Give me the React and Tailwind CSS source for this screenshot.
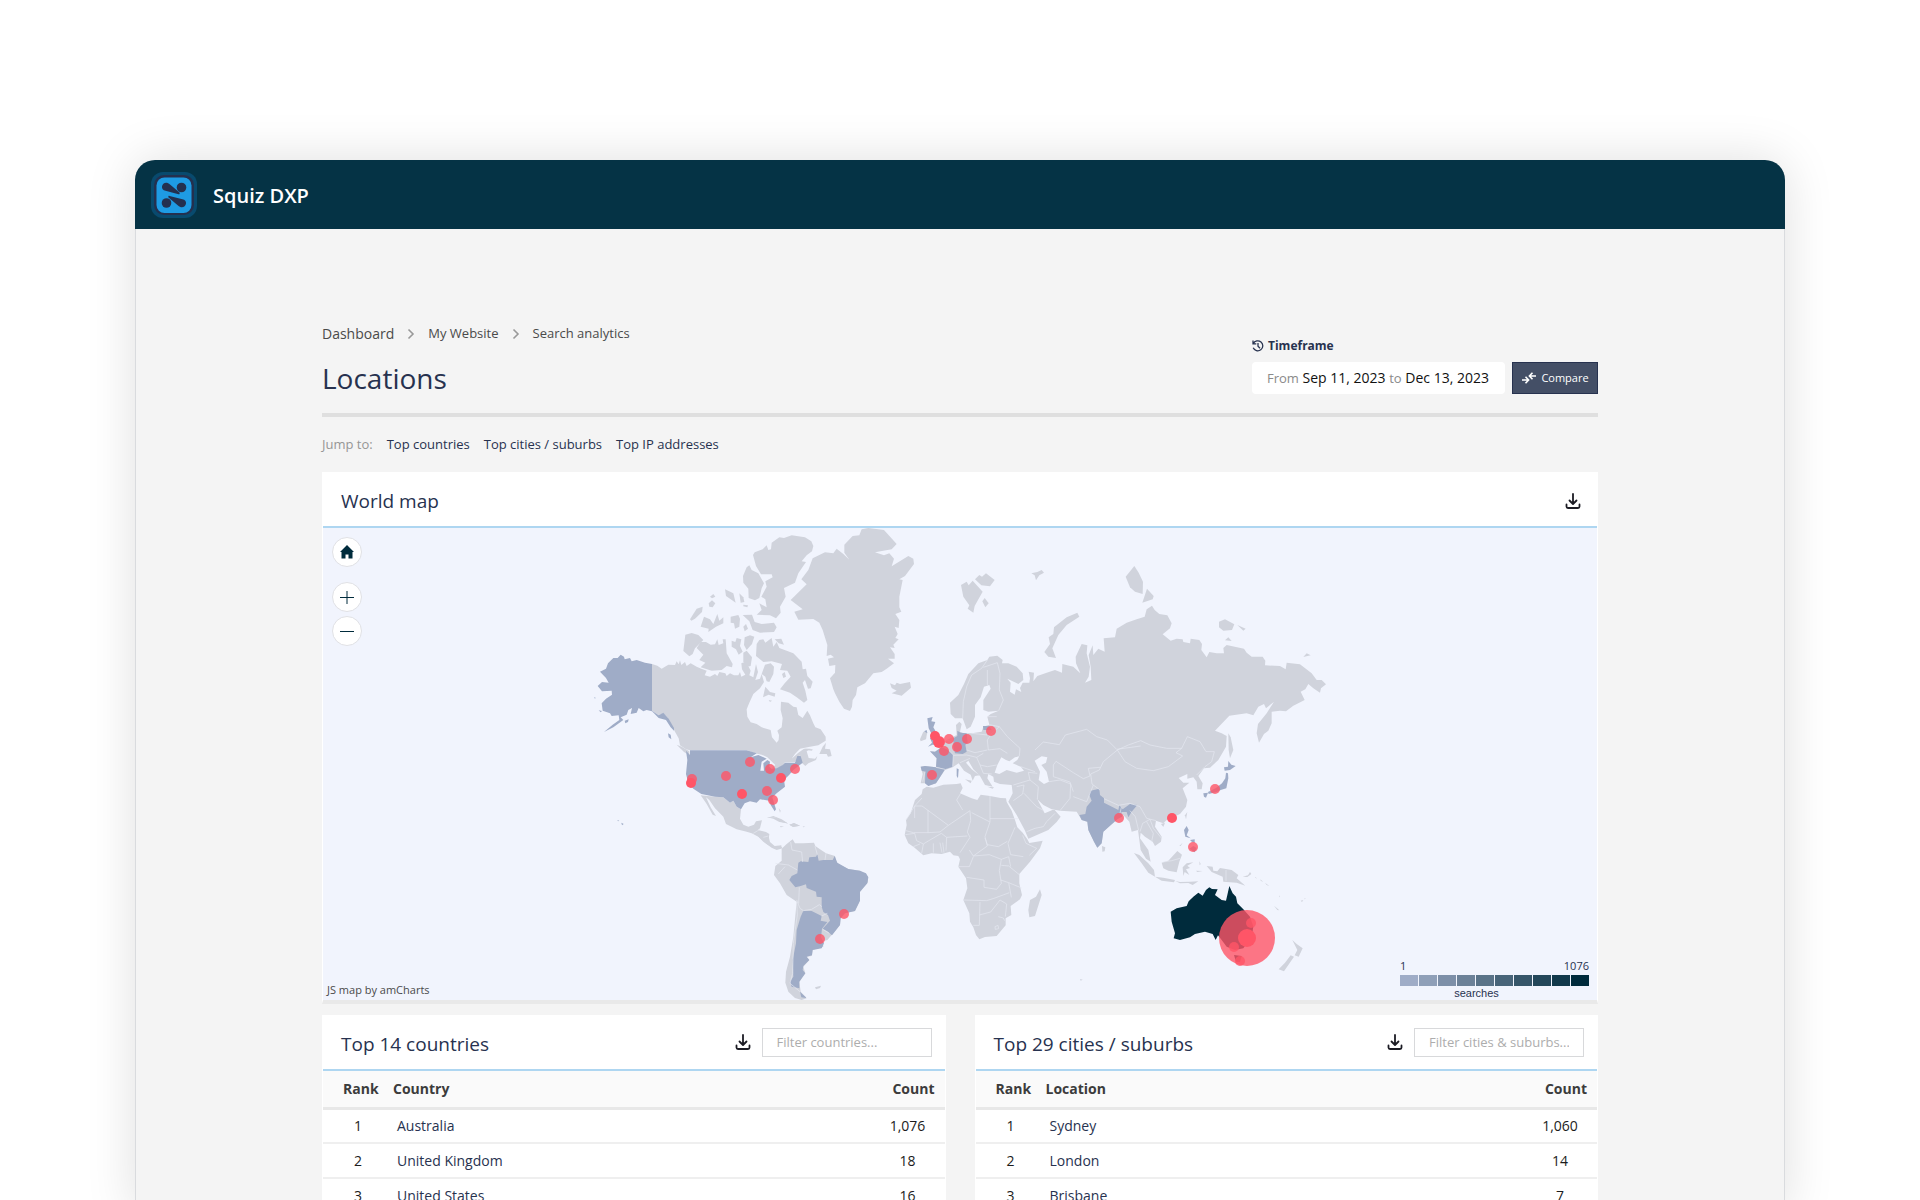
import { useState } from 'react'

const LAND = '#d0d3dc'
const ACTIVE = '#9facc7'
const MAX = '#002b3c'
const POINT = '#ff5567'

const countries = [
  { name: 'Australia', count: '1,076' },
  { name: 'United Kingdom', count: '18' },
  { name: 'United States', count: '16' },
]

const cities = [
  { name: 'Sydney', count: '1,060' },
  { name: 'London', count: '14' },
  { name: 'Brisbane', count: '7' },
]

const legend = ['#9facc7', '#8f9fb8', '#7d8fa8', '#6c8198', '#5a7388', '#486479', '#365569', '#24475a', '#12394b', '#002b3c']

// every region is drawn at 3x in its own coordinates, x / y is its origin on the map
const americas = {
  x: 580, y: 520,
  land: [
    // Canada
    'M216 432L232 437 245 446 265 434 285 435 290 424 296 433 300 421 304 435 315 426 320 438 332 430 350 440 364 446 380 452 374 466 390 470 405 462 412 468 418 456 436 460 440 468 450 460 462 466 475 466 480 456 484 470 496 464 486 448 484 430 494 426 506 440 512 452 508 466 520 472 528 432 534 456 526 480 540 476 545 462 552 486 540 505 520 522 508 548 500 568 502 590 512 607 530 612 545 622 572 630 576 652 590 668 596 660 597 645 592 632 605 622 608 595 602 570 603 545 625 548 640 560 650 562 655 585 668 594 682 572 690 586 700 610 706 622 722 628 737 650 737 662 715 676 690 680 660 686 645 702 635 716 655 698 672 686 692 686 680 694 686 714 705 716 712 708 708 720 685 730 676 738 665 728 660 706 645 726 615 727 606 738 586 748 575 745 586 735 562 712 545 704 525 700 500 690 330 691 318 688 300 676 296 655 282 630 262 592 250 580 236 586 216 572Z',
    'M718 702L728 680 738 668 735 686 750 688 755 708 744 710 740 702Z', 'M290 674L305 680 328 694 328 706 312 696Z', 'M675 686L698 688 696 692 680 690Z',
    // Arctic islands
    'M519 105L524 97 548 88 560 76 565 90 573 88 575 68 598 52 612 54 635 46 675 52 694 64 700 78 696 94 680 106 665 124 678 126 655 160 645 188 612 204 617 230 600 260 602 278 588 295 570 286 530 284 545 270 538 250 560 262 556 238 544 230 560 200 556 184 578 172 575 163 543 163 528 138Z',
    'M500 142L508 136 515 150 535 160 552 190 545 205 538 234 525 241 506 234 505 206 490 188 489 168Z',
    'M435 208L460 220 467 248 450 236 438 228Z', 'M478 220L490 232 493 246 482 248Z', 'M386 250L396 241 406 250 398 262 388 260Z', 'M390 230L400 222 406 230 396 235Z', 'M330 298L350 266 368 260 366 276 345 296 334 302Z',
    'M362 320L372 290 390 298 400 312 412 282 418 302 430 292 430 310 408 320 385 336 386 326Z', 'M452 290L475 285 480 296 478 320 465 326 462 310 452 308Z', 'M488 285L516 284 524 306 545 312 582 308 590 322 582 336 540 338 518 330 508 304Z', 'M490 320L498 312 504 326 494 334Z', 'M490 254L504 256 502 262 490 259Z',
    'M316 344L335 339 355 345 370 360 345 385 338 402 328 409 310 393Z',
    'M350 384L362 366 378 366 392 374 405 373 412 358 416 375 430 370 428 358 437 358 440 400 458 432 456 442 440 438 425 450 395 452 362 442 376 428 358 420 370 404Z',
    'M455 362L466 366 470 354 484 358 480 378 488 395 476 404 468 388 455 380Z', 'M494 352L510 346 523 350 516 372 500 390 492 375Z', 'M490 398L500 392 516 412 512 438 502 440 490 424Z',
    'M530 372L538 360 550 358 556 368 575 354 580 380 590 366 598 384 640 400 665 425 668 448 678 446 682 468 698 485 692 505 684 506 675 480 668 488 676 512 682 540 672 548 650 532 630 518 600 508 614 490 632 470 622 452 600 450 606 432 575 424 550 426 528 408Z',
    'M584 358L604 356 612 374 596 370Z', 'M555 434L572 430 582 440 580 462 568 486 560 484 556 470 545 462Z', 'M606 462L614 456 618 470 610 474Z', 'M549 532L556 500 570 516 586 520 584 530 566 524Z', 'M566 540L576 542 570 546Z',
    // Greenland
    'M632 240L680 193 664 178 685 150 698 115 735 97 760 100 770 86 790 102 808 119 793 98 793 74 818 48 838 46 845 28 865 24 912 30 950 72 935 88 885 97 912 106 928 100 942 116 935 139 985 108 1000 116 1002 132 975 168 958 178 968 180 958 230 958 262 964 275 946 282 958 300 956 324 944 320 953 342 946 354 956 358 940 374 944 384 930 382 944 402 944 416 924 416 942 430 920 446 905 456 880 460 855 490 832 502 828 525 818 540 816 560 810 573 792 566 778 545 765 520 760 508 750 475 765 458 766 435 748 438 744 416 762 412 752 404 740 408 742 375 728 330 718 308 700 297 655 299 643 275 668 268Z',
    'M930 490L945 496 950 488 960 492 990 486 993 503 965 527 935 520 950 512 935 504Z',
    // Mexico and Central America
    'M362 826L405 830 430 832 450 848 460 842 470 860 483 868 480 896 490 914 505 920 522 914 528 904 546 901 540 925 534 930 558 936 568 942 565 966 580 980 602 978 608 985 590 990 575 983 550 965 535 950 515 940 500 935 470 928 438 912 430 890 405 865 388 840 378 832 392 862 408 888 398 884 380 852Z',
    'M560 894L580 888 605 898 625 911 604 906 585 892Z', 'M628 914L642 909 660 917 640 921Z', 'M600 918L612 920 602 922Z', 'M668 919L676 920 670 922Z', 'M596 864L602 872 600 878Z',
  ],
  active: [
    'M53 498L66 486 86 488 78 474 60 455 78 446 84 430 100 414 113 414 122 404 132 410 134 418 150 414 155 424 170 420 195 428 216 432 216 572 236 586 250 578 266 596 282 624 282 632 272 622 258 600 236 594 216 574 200 570 190 574 176 564 170 578 152 582 156 564 145 570 140 584 122 592 130 600 100 622 72 636 98 614 118 600 116 586 95 588 90 580 68 572 65 550 78 536 96 524 95 512 66 514Z',
    'M134 602L146 598 144 606 136 610Z', 'M264 640L272 644 274 658 266 652Z', 'M56 571L66 573 62 577Z', 'M42 532L47 533 45 536Z', 'M124 908L131 912 126 916Z', 'M112 900L118 902 114 904Z',
    'M318 692L330 705 330 691 500 691 530 700 512 712 535 705 560 716 545 725 541 752 552 752 550 730 562 720 570 725 568 740 575 746 590 745 608 735 615 728 645 728 652 708 662 708 668 728 640 750 628 764 612 780 615 800 590 820 577 832 588 868 584 874 572 855 568 842 540 838 530 848 510 844 494 850 483 868 470 860 460 842 450 848 430 832 405 830 364 822 340 806 325 790 318 762 322 720Z',
  ],
  lines: [],
}

const southAmericaAfrica = {
  x: 740, y: 800,
  land: [
    'M125 146L140 132 158 118 165 130 190 130 222 128 226 138 240 148 258 160 285 168 290 190 325 207 360 212 384 230 384 246 360 276 358 305 345 333 315 340 302 355 300 375 275 405 262 420 248 424 250 440 218 450 215 468 200 470 208 480 190 500 196 520 178 545 182 575 200 595 185 600 165 594 145 575 136 548 138 515 150 470 160 410 170 305 140 285 120 250 102 225 106 198 125 182Z',
    'M40 96L62 98 85 106 90 126 104 138 124 136 124 144 104 146 80 132Z', 'M225 562L243 557 240 564 228 568Z', 'M82 52L105 52 125 60 143 70 118 66 100 56Z', 'M148 74L162 70 180 77 158 80Z',
    'M560 -40L580 -37 610 -46 650 -48 662 -50 668 -36 660 -20 695 -5 712 0 722 -16 750 -12 782 -6 798 -5 800 6 815 32 825 60 832 82 848 98 862 118 868 129 908 122 900 145 870 185 838 222 838 250 846 285 840 298 812 318 814 345 797 355 797 376 770 408 735 411 718 418 708 405 700 382 690 365 688 340 670 300 682 265 678 235 655 200 660 178 655 168 640 166 630 155 605 162 575 160 550 166 522 142 505 130 494 105 500 75 498 60 512 40 525 0 545 -18 548 -32Z',
    'M900 268L905 285 885 348 868 352 865 330 870 300 888 290Z',
  ],
  active: [
    'M175 188L182 184 205 186 208 172 228 170 232 163 236 182 250 180 278 180 284 168 292 188 325 207 360 212 378 220 385 232 382 250 360 275 360 302 345 333 315 340 302 355 300 375 276 406 262 394 248 386 270 362 264 345 250 336 245 320 245 292 230 290 228 275 200 264 198 253 182 258 166 262 148 240 155 228 172 220Z',
    'M190 332L215 333 245 348 242 362 262 366 246 386 243 412 252 430 245 445 218 450 216 466 200 470 208 480 190 498 188 510 196 520 178 545 178 565 155 560 150 545 160 530 158 480 168 430 170 390 182 350Z', 'M180 575L200 594 184 592Z',
  ],
  lines: [
    'M152 126L156 150 185 156 188 186M225 138L232 164M258 160L255 180M106 190L145 195 172 210M115 222L135 200M170 300L180 325 190 332M178 262L176 310M190 332L215 328 238 314 246 320M245 348L262 340M170 305L172 345 160 430 158 520 150 550 180 575M248 388L268 400M40 100L60 88M70 112L85 108',
    'M546 -6L524 18 498 60M546 18H524V54M546 18L625 76 690 32M564 30V98H520L498 92M564 98L600 96 625 76M662 -20L650 0 668 30M750 -12V66L695 38M750 56H834M750 66L735 110 742 138 700 168 688 150M690 32L692 62 682 96 690 112 660 158M682 108L620 112 618 152M735 114L742 134 775 140 802 124M825 82L812 112 804 130 812 164 850 170M848 106L858 130 890 145 868 166M700 168L748 164 784 178 778 212 784 250 770 268 732 262V240L680 232M670 300L740 302 765 294 808 278M784 196L806 198 838 224M782 240L806 248 845 264M806 248L814 292M720 306L718 376 700 376M718 345L752 336 780 300 800 312 796 350M765 380L774 376 776 386 766 388ZM620 112L604 100 570 120M580 130V158M600 128L606 158M608 128L612 158M545 160L550 132 570 120M520 140L540 132M496 104L524 100 530 122 550 132M784 178L806 170 812 200M655 200H688L700 170M775 350L790 354 794 362',
  ],
}

const eurasia = {
  x: 900, y: 520,
  land: [
    'M150 548L175 525 192 492 205 462 235 430 262 420 268 410 292 407 308 420 306 430 325 430 350 440 368 460 370 480 355 492 322 476 332 488 330 515 344 524 348 508 364 516 360 504 368 488 388 488 390 475 386 455 402 458 400 484 412 468 440 458 465 450 486 458 487 432 520 440 541 460 528 430 527 410 545 372 562 376 560 400 570 440 566 470 555 488 574 480 572 440 566 405 578 376 580 405 595 386 614 395 611 355 645 352 650 326 680 308 710 298 734 290 740 268 756 257 764 270 778 282 802 286 815 310 810 325 788 343 812 362 830 356 848 358 850 366 870 370 872 356 898 360 906 372 904 390 920 412 928 396 950 400 972 400 970 384 980 375 1032 386 1040 398 1055 410 1088 410 1096 422 1095 436 1140 438 1157 448 1160 428 1200 433 1235 460 1250 480 1265 480 1278 493 1263 505 1260 518 1240 505 1225 492 1216 508 1202 515 1214 540 1180 557 1158 574 1140 572 1115 575 1115 610 1105 632 1092 642 1077 668 1070 640 1074 612 1100 580 1122 545 1110 555 1098 565 1092 552 1075 560 1060 586 1040 580 988 587 945 632 965 640 980 648 978 680 955 720 930 743 912 745 895 768 908 790 905 808 892 808 890 785 880 772 862 776 862 762 836 774 850 788 868 788 848 805 862 840 858 860 840 882 800 900 790 910 768 902 765 920 785 950 783 965 765 978 758 965 735 950 722 938 720 955 745 990 752 1025 738 1016 722 990 714 930 695 935 688 905 670 885 658 892 610 935 605 970 592 983 582 965 565 930 562 905 545 900 530 875 480 872 455 868 430 855 412 838 434 880 452 872 462 868 482 890 470 906 445 930 385 956 374 930 350 885 325 845 338 820 335 795 300 792 282 785 280 770 265 762 262 775 278 800 255 795 240 768 220 748 205 722 198 728 215 748 238 766 225 768 218 782 212 764 192 752 176 730 158 742 135 750 118 775 108 790 85 797 75 790 62 790 68 762 62 740 75 738 108 742 110 715 90 694 105 695 125 680 140 660 160 650 170 645 168 615 178 605 185 612 180 635 190 640 215 640 245 635 250 620 268 614 262 590 272 582 296 572 265 575 250 570 250 540 272 506 268 495 252 500 242 532 225 555 225 590 212 620 200 628 188 595 165 595 152 582Z',
    'M60 658L70 635 82 636 78 658 62 664Z', 'M195 778L215 782 212 790Z', 'M262 800L282 802 278 806Z',
    // Arctic
    'M183 195L200 185 206 196 218 182 248 215 234 240 224 258 220 278 203 266 208 256 190 230Z', 'M225 178L238 165 246 170 258 160 284 180 270 199 244 196Z', 'M247 244L254 234 266 250 256 262Z', 'M394 160L412 156 425 150 432 158 418 166 408 181 404 166Z',
    'M433 396L450 372 446 352 460 342 462 322 500 292 532 278 538 290 500 315 475 345 457 385 468 414 445 410Z',
    'M677 170L703 138 716 158 729 185 728 222 705 215 690 202Z', 'M741 206L761 228 758 238 727 248Z', 'M957 305L975 298 1003 313 996 330 970 332 957 322Z', 'M1012 315L1037 326 1030 332Z', 'M975 361L985 352 995 363Z', 'M1210 411L1220 400 1232 406Z',
    'M985 640L992 652 1000 690 990 715 986 690Z', 'M606 978L616 982 614 994 607 995Z',
  ],
  active: [
    'M82 595L98 591 94 604 106 606 100 622 115 648 130 660 122 675 98 674 84 680 96 668 90 655 98 648 86 625Z', 'M72 634L80 630 82 640Z',
    'M90 694L105 695 125 682 145 690 160 705 158 740 135 748 108 740 110 715Z',
    'M62 740L75 738 108 742 135 748 118 775 108 790 85 798 75 790 76 755 65 752Z',
    'M160 655L172 648 172 632 182 638 200 640 203 668 196 674 200 695 188 702 165 700 160 680Z',
    'M249 618L268 618 275 630 250 630Z', 'M170 745L176 748 174 775 170 768Z',
    'M572 812L598 806 600 825 612 835 612 848 655 870 658 856 668 868 690 852 712 855 695 875 685 892 680 876 664 876 666 890 652 898 610 935 605 970 592 983 582 965 565 930 562 905 545 900 538 885 556 882 560 860 575 842 568 825Z',
    'M985 723L994 734 1007 738 990 750 974 752 972 742 984 740Z', 'M978 758L984 760 985 775 979 805 962 810 950 816 926 822 924 816 948 804 966 790 976 775Z', 'M910 820L924 818 918 833 912 830Z',
  ],
  lines: [
    'M652 690L685 675 722 662 750 675 800 685 845 685 862 650 900 665 918 695 943 695 935 725 915 740 890 765M652 690L675 725 710 745 760 752 805 740 848 708 828 698 845 685M652 690L610 725 598 750 572 762 576 792 600 810',
    'M405 690L430 666 478 674 496 645 560 628 590 650 622 660 650 688 722 678M460 735L468 724 520 758 550 776 570 768 565 745 600 742M460 735V770L510 786 520 815M447 785L480 780 512 792 510 835 480 872M520 830L560 845 580 795M612 836L655 856 690 850 720 860 740 895 768 902M720 935L728 910 750 898 760 925 785 955M740 905L760 940 755 965M690 872L706 890 716 932M664 862L660 880',
    'M262 420L245 445 215 465 200 500 190 545 188 595M262 450L262 495M250 442L292 428 300 460 298 510 310 540 296 572M262 590L290 590M268 614L298 620 322 650 360 685 358 708M298 620L275 640 262 660 265 690 300 686 322 700M215 640L262 645M200 690L225 698 262 690M160 706L200 705 230 712 250 700M230 712L240 735 262 740 290 735M180 728L210 715M240 735L250 760 275 762M145 690L160 705 158 740M108 742L135 748M75 755L68 785M140 660L160 668M385 757L412 760M385 757L390 780 340 795M390 780L415 800 412 838M350 800L372 795 368 822 340 842M372 820L410 860 432 872M380 935L405 925 430 920 440 905 465 880M362 740L405 755',
  ],
  seas: [
    'M284 758L292 735 304 712 318 720 328 724 345 712 358 709 352 720 338 730 362 740 372 752 350 758 320 750 298 762Z',
    'M404 722L425 709 442 712 438 728 424 735 440 755 447 785 432 792 416 780 420 755Z',
  ],
}

const oceania = {
  x: 1080, y: 780,
  land: [
    'M162 219L178 225 205 250 222 270 225 290 205 278 185 250Z', 'M225 290L250 293 285 300 282 307 245 302Z', 'M286 303L300 306 330 305 355 304 338 315 325 309 300 310Z',
    'M245 248L265 242 292 213 306 224 298 245 290 277 265 272 250 265Z', 'M308 262L320 250 340 247 322 257 330 264 318 268 328 285 314 276 310 288Z',
    'M380 258L398 260 400 272 412 274 420 264 455 270 475 285 470 295 496 317 470 308 430 305 428 290 395 276Z', 'M488 290L504 286 510 276 514 282 502 291Z', 'M358 244L362 252 359 256Z', 'M348 272L368 273 352 276Z',
    'M315 106L322 96 318 118Z', 'M243 132L255 128 250 141Z', 'M298 198L308 188 302 198Z',
    'M637 480L650 492 668 505 656 530 644 526 652 510Z', 'M632 526L642 530 625 555 612 574 596 568 615 548Z', 'M582 377L598 391 592 390Z', 'M662 362L670 360 666 366Z', 'M0 597L8 599 2 602Z', 'M525 290L532 296 526 293ZM540 298L550 305 543 303ZM555 308L568 318 560 315ZM597 346L600 350 598 352ZM672 356L678 355 674 358Z',
  ],
  active: [
    'M312 150L320 138 326 150 320 166 332 175 316 170Z', 'M330 180L344 178 344 188 336 186Z', 'M328 206L340 198 350 204 344 217Z',
  ],
  lines: ['M250 246L275 242 300 235M438 270V304'],
}

const australia = [
  'M272 395L290 385 320 378 326 364 340 350 355 338 368 347 378 330 388 322 396 327 413 328 405 345 425 360 438 362 442 345 448 318 458 340 468 350 472 370 490 388 510 410 520 440 515 470 490 505 465 510 440 500 425 480 414 466 407 480 398 462 375 455 345 462 330 472 300 480 281 475 285 460 275 425Z',
  'M462 525L485 528 480 546 468 545Z',
]

// [x, y, radius, opacity]
const points = [
  [692, 779, 5], [691, 783, 5, 1], [726, 776, 5], [750, 762, 5], [770, 769, 5], [795, 769, 5], [781, 778, 5, 1], [742, 794, 5, 1], [767, 791, 5], [773, 800, 5],
  [935, 736, 5, 1], [939, 742, 6, 1], [949, 739, 5], [944, 751, 5], [957, 747, 5], [967, 739, 5], [991, 731, 5], [932, 775, 5],
  [1119, 818, 5], [1215, 789, 5], [1172, 818, 5, 1], [1193, 847, 5], [844, 914, 5], [820, 939, 5],
  [1247, 938, 28], [1247, 938, 9, 1], [1251, 923, 5], [1234, 947, 5], [1240, 961, 5],
]

function Region({ region }) {
  return (
    <g transform={`translate(${region.x} ${region.y}) scale(0.33333)`}>
      {region.land.map(d => <path key={d} d={d} fill={LAND} />)}
      {region.active.map(d => <path key={d} d={d} fill={ACTIVE} />)}
      {region.lines.map(d => <path key={d} d={d} fill="none" stroke="#e6e9f2" strokeWidth="2" strokeLinejoin="round" />)}
      {region.seas?.map(d => <path key={d} d={d} fill="#f1f4fd" />)}
    </g>
  )
}

function WorldMap() {
  return (
    <svg viewBox="323 528 1274 472" className="block w-full h-auto" role="img" aria-label="World map">
      <Region region={americas} />
      <Region region={southAmericaAfrica} />
      <Region region={eurasia} />
      <Region region={oceania} />
      <g transform="translate(1080 780) scale(0.33333)" fill={MAX}>
        {australia.map(d => <path key={d} d={d} />)}
      </g>
      {points.map(([x, y, r, o], i) => <circle key={i} cx={x} cy={y} r={r} fill={POINT} opacity={o || 0.8} />)}
    </svg>
  )
}

function Logo() {
  return (
    <svg viewBox="0 0 46 46" className="w-[46px] h-[46px]" aria-hidden="true">
      <rect width="46" height="46" rx="12" fill="#084a6e" />
      <rect x="3" y="3" width="40" height="40" rx="10" fill="#24304f" />
      <rect x="5.500" y="5.500" width="35" height="35.500" rx="8" fill="#1e9be4" />
      <g fill="#24304f">
        <circle cx="30.500" cy="15.500" r="4.800" />
        <circle cx="15.500" cy="31" r="4.800" />
        <path d="M11 14.500C11.500 10.500 16 9.500 19 12.500L28.500 20.500C29 21.800 28.500 22.500 27.500 22.300L14.500 18.800C12 18 10.700 17 11 14.500Z" />
        <path d="M35 31.500C34.500 35.500 30 36.500 27 33.500L17.500 25.500C17 24.300 17.500 23.700 18.500 23.900L31.500 27.200C34 27.900 35.300 29 35 31.500Z" />
      </g>
    </svg>
  )
}

function DownloadIcon() {
  return (
    <svg viewBox="0 0 16 16" className="w-4 h-4" fill="none" stroke="#1c1c24" strokeWidth="1.800" strokeLinecap="round" strokeLinejoin="round" aria-hidden="true">
      <path d="M8 1V10.500M4.500 7.500L8 11 11.500 7.500M1.500 11.500V13.500Q1.500 15 3 15H13Q14.500 15 14.500 13.500V11.500" />
    </svg>
  )
}

function Chevron() {
  return (
    <svg viewBox="0 0 8 12" className="w-2 h-3" fill="none" stroke="#999" strokeWidth="1.600" aria-hidden="true">
      <path d="M1.500 1.500L6 6 1.500 10.500" />
    </svg>
  )
}

function RankTable({ title, column, placeholder, rows }) {
  const [filter, setFilter] = useState('')
  const shown = rows.map((r, i) => ({ ...r, rank: i + 1 })).filter(r => r.name.toLowerCase().includes(filter.toLowerCase()))

  return (
    <section className="bg-white border-x border-white min-w-0">
      <div className="flex items-center justify-between h-[56px] pl-[18px] pr-[13px] border-b-2 border-[#aed6f1]">
        <h2 className="text-[19px] pt-1">{title}</h2>
        <div className="flex items-center gap-[11px]">
          <button aria-label={`Download ${title}`}><DownloadIcon /></button>
          <input value={filter} onChange={e => setFilter(e.target.value)} placeholder={placeholder} aria-label={placeholder}
            className="w-[170px] h-[29px] px-[14px] text-[13px] border border-[#d8d9db] outline-none placeholder:text-[#adadad]" />
        </div>
      </div>
      <table className="w-full table-fixed text-sm">
        <thead>
          <tr className="h-[37px] bg-[#fafafa] border-b-3 border-[#e8e8e8] text-[#3c3c3c] font-bold">
            <th className="w-[70px] pl-5 text-left">Rank</th>
            <th className="text-left">{column}</th>
            <th className="w-[74px] pr-[10px] text-right">Count</th>
          </tr>
        </thead>
        <tbody>
          {shown.map(r => (
            <tr key={r.rank} className="h-[35px] border-b-2 border-[#efefef]">
              <td className="text-center text-[#1c1c1c]">{r.rank}</td>
              <td className="pl-1"><a href="#">{r.name}</a></td>
              <td className="text-center text-[#1c1c1c]">{r.count}</td>
            </tr>
          ))}
        </tbody>
      </table>
    </section>
  )
}

export default function App() {
  return (
    <div className="h-screen overflow-hidden bg-white px-[135px] pt-40 font-['Open_Sans','Noto_Sans',sans-serif] text-[#27324f]">
      <div className="min-h-full rounded-t-[20px] bg-[#f4f4f4] shadow-[0_0_50px_rgba(0,0,0,0.13)]">
        <header className="flex items-center gap-4 h-[69px] pl-4 rounded-t-[20px] bg-[#053345]">
          <Logo />
          <span className="pt-[3px] text-[20px] font-semibold text-white">Squiz DXP</span>
        </header>

        <main className="border-x border-[#d9dbde] px-[186px] pt-[94px]">
          <div className="flex items-end justify-between h-[94px] pb-[4px]">
            <div className="pb-[17px]">
              <nav className="flex items-center gap-[13px] h-5 mb-4 text-[13px] text-[#4a4a4a]">
                <a href="#" className="text-sm">Dashboard</a>
                <Chevron />
                <a href="#">My Website</a>
                <Chevron />
                <a href="#">Search analytics</a>
              </nav>
              <h1 className="text-[28px] leading-9">Locations</h1>
            </div>

            <div className="mb-[19px]">
              <div className="flex items-center gap-1 mb-2 text-xs leading-4 font-bold">
                <svg viewBox="0 0 12 12" className="w-3 h-3" fill="none" stroke="currentColor" strokeWidth="1.300" aria-hidden="true">
                  <path d="M1 .5V3.800H4.300M1.300 3.600A5 5 0 1 1 1.200 7.800M6 3V6.300L8 8.300" />
                </svg>
                Timeframe
              </div>
              <div className="flex gap-[7px]">
                <button className="w-[253px] h-8 pl-[15px] rounded-sm bg-white text-left text-sm text-[#111]">
                  <span className="text-[13px] text-[#8a8a8a]">From</span> Sep 11, 2023 <span className="text-[13px] text-[#8a8a8a]">to</span> Dec 13, 2023
                </button>
                <button className="flex items-center justify-center gap-1 w-[86px] h-8 border border-[#27324f] bg-[#444f66] text-[11px] text-white">
                  <svg viewBox="0 0 16 12" className="w-4 h-3" fill="none" stroke="white" strokeWidth="1.600" aria-hidden="true">
                    <path d="M1 8H7M4.500 4.800L7.600 8 4.500 11.200M15 4H9M11.500 .8L8.400 4 11.500 7.200" />
                  </svg>
                  Compare
                </button>
              </div>
            </div>
          </div>

          <div className="h-1 -mt-1 bg-[#dfdfdf]" />

          <nav className="flex items-center gap-[14px] h-[55px] pt-px text-[13px]">
            <span className="text-[#969696]">Jump to:</span>
            <a href="#countries">Top countries</a>
            <a href="#cities">Top cities / suburbs</a>
            <a href="#ips">Top IP addresses</a>
          </nav>

          <section className="bg-white border-x border-b-4 border-x-white border-b-[#e9e9e9]">
            <div className="flex items-center justify-between h-[56px] pl-[18px] pr-4 pt-[3px] border-b-2 border-[#aed6f1]">
              <h2 className="text-[19px] pt-px">World map</h2>
              <button aria-label="Download map"><DownloadIcon /></button>
            </div>
            <div className="relative bg-[#f1f4fd]">
              <WorldMap />
              <div className="absolute left-[9px] top-[9px] flex flex-col gap-1 text-[#002b3c]">
                <button aria-label="Home" className="flex items-center justify-center w-[30px] h-[30px] mb-[11px] rounded-full border border-[#e0e1e5] bg-white">
                  <svg viewBox="0 0 14 14" className="w-[14px] h-[14px]" fill="currentColor"><path d="M7 0L14 7H12.500V13.500H8.500V9.500H5.500V13.500H1.500V7H0Z" /></svg>
                </button>
                <button aria-label="Zoom in" className="flex items-center justify-center w-[30px] h-[30px] rounded-full border border-[#e0e1e5] bg-white">
                  <svg viewBox="0 0 14 14" className="w-[14px] h-[14px]" stroke="currentColor"><path d="M0 7.500H14M7 1V14" /></svg>
                </button>
                <button aria-label="Zoom out" className="flex items-center justify-center w-[30px] h-[30px] rounded-full border border-[#e0e1e5] bg-white">
                  <svg viewBox="0 0 14 14" className="w-[14px] h-[14px]" stroke="currentColor"><path d="M0 7.500H14" /></svg>
                </button>
              </div>
              <a href="#" className="absolute left-1 bottom-[2px] text-[11px] leading-4 text-[#4a4a4a]">JS map by amCharts</a>
              <div className="absolute right-2 bottom-0 w-[189px] text-[11px]">
                <div className="flex justify-between leading-4"><span>1</span><span>1076</span></div>
                <div className="flex gap-px h-[11px] mt-px">
                  {legend.map(c => <span key={c} className="flex-1" style={{ backgroundColor: c }} />)}
                </div>
                <div className="pr-9 text-center leading-[14px] font-['Liberation_Sans',sans-serif]">searches</div>
              </div>
            </div>
          </section>

          <div className="grid grid-cols-2 gap-[29px] mt-[11px]">
            <RankTable title="Top 14 countries" column="Country" placeholder="Filter countries..." rows={countries} />
            <RankTable title="Top 29 cities / suburbs" column="Location" placeholder="Filter cities & suburbs..." rows={cities} />
          </div>
        </main>
      </div>
    </div>
  )
}
